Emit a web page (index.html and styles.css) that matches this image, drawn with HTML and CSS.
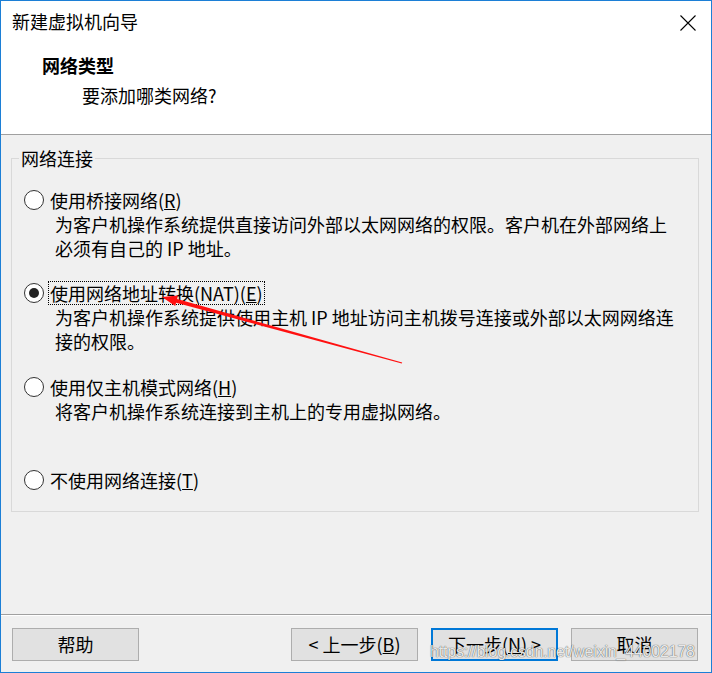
FILE: index.html
```html
<!DOCTYPE html>
<html lang="zh-CN">
<head>
<meta charset="utf-8">
<title>新建虚拟机向导</title>
<link rel="stylesheet" href="styles.css">
</head>
<body>
<div class="window">
  <div class="titlebar">
    <span class="title">新建虚拟机向导</span>
    <svg class="close" width="16" height="16" viewBox="0 0 16 16"><path d="M0.5 0.5 L15.5 15.5 M15.5 0.5 L0.5 15.5" stroke="#000" stroke-width="1.1" fill="none"/></svg>
  </div>
  <div class="header">
    <div class="h-title">网络类型</div>
    <div class="h-sub">要添加哪类网络?</div>
  </div>
  <div class="body">
    <fieldset class="group">
      <legend>网络连接</legend>
      <div class="option opt1">
        <div class="opt-row"><span class="radio"></span><span class="label">使用桥接网络(<u>R</u>)</span></div>
        <div class="desc">为客户机操作系统提供直接访问外部以太网网络的权限。客户机在外部网络上<br>必须有自己的 IP 地址。</div>
      </div>
      <div class="option opt2">
        <div class="opt-row"><span class="radio checked"></span><span class="label focus">使用网络地址转换(NAT)(<u>E</u>)</span></div>
        <div class="desc">为客户机操作系统提供使用主机 IP 地址访问主机拨号连接或外部以太网网络连<br>接的权限。</div>
      </div>
      <div class="option opt3">
        <div class="opt-row"><span class="radio"></span><span class="label">使用仅主机模式网络(<u>H</u>)</span></div>
        <div class="desc tall">将客户机操作系统连接到主机上的专用虚拟网络。</div>
      </div>
      <div class="option opt4">
        <div class="opt-row"><span class="radio"></span><span class="label">不使用网络连接(<u>T</u>)</span></div>
      </div>
    </fieldset>
  </div>
  <div class="footer">
    <button class="btn">帮助</button>
    <span class="spacer"></span>
    <button class="btn">&lt; 上一步(<u>B</u>)</button>
    <button class="btn default">下一步(<u>N</u>) &gt;</button>
    <button class="btn">取消</button>
  </div>
</div>
<svg class="arrow" width="712" height="673" viewBox="0 0 712 673">
  <polygon points="162,297 178,295.6 177.1,298.9 402.2,362.6 401.8,363.4 176.1,302.7 175.2,306" fill="#ff1010"/>
</svg>
<div class="watermark">https://blog.csdn.net/weixin_44002178</div>
</body>
</html>
```
FILE: styles.css
```css
html, body {
  margin: 0;
  padding: 0;
  background: #f0f0f0;
}
body {
  font-family: "Noto Sans CJK SC", "Noto Sans", sans-serif;
  font-size: 18px;
  color: #000;
}
.window {
  width: 712px;
  height: 673px;
  box-sizing: border-box;
  border: 1px solid #1c7fd6;
  background: #f0f0f0;
  display: flex;
  flex-direction: column;
}
.titlebar {
  height: 43px;
  box-sizing: border-box;
  background: #fff;
  display: flex;
  align-items: center;
  justify-content: space-between;
  padding: 0 15px 3px 11px;
}
.title {
  line-height: 24px;
}
.close {
  display: block;
  margin-top: 3px;
}
.header {
  height: 90px;
  background: #fff;
  border-bottom: 1px solid #a0a0a0;
  padding-left: 41px;
  box-sizing: content-box;
}
.h-title {
  font-weight: bold;
  line-height: 24px;
  padding-top: 9px;
}
.h-sub {
  line-height: 24px;
  padding-left: 40px;
  margin-top: 6px;
}
.body {
  flex: 1;
  padding: 0 12px 0 10px;
}
.group {
  margin: 11px 0 0 0;
  padding: 0 0 19px 0;
  border: 1px solid #d9d9d9;
  min-width: 0;
}
.group legend {
  margin-left: 7px;
  padding: 0 2px;
  line-height: 24px;
}
.opt-row {
  display: flex;
  align-items: center;
  height: 24px;
  padding-left: 12px;
}
.opt1 { margin-top: 18px; }
.opt2 { margin-top: 21px; }
.opt3 { margin-top: 22px; }
.opt4 { margin-top: 21px; }
.radio {
  width: 20px;
  height: 20px;
  box-sizing: border-box;
  border: 1px solid #333;
  border-radius: 50%;
  background: #fff;
  display: flex;
  align-items: center;
  justify-content: center;
  flex: none;
}
.radio.checked::after {
  content: "";
  width: 10px;
  height: 10px;
  border-radius: 50%;
  background: #222;
}
.label {
  margin-left: 4px;
  padding: 0 1px;
  border: 1px dotted transparent;
  line-height: 22px;
  white-space: nowrap;
}
.label.focus {
  border-color: #000;
}
.desc {
  padding-left: 43px;
  line-height: 24px;
  white-space: nowrap;
}
.desc.tall {
  min-height: 48px;
}
.footer {
  height: 58px;
  border-top: 1px solid #a0a0a0;
  box-shadow: inset 0 1px 0 #fff;
  display: flex;
  align-items: flex-start;
  gap: 13px;
  padding: 13px 13px 0 11px;
  box-sizing: border-box;
}
.spacer {
  flex: 1;
}
.footer .spacer + .btn {
  margin-left: -13px;
}
.btn {
  width: 127px;
  height: 33px;
  box-sizing: border-box;
  background: #e1e1e1;
  border: 1px solid #adadad;
  font-family: "Noto Sans CJK SC", "Noto Sans", sans-serif;
  font-size: 18px;
  color: #000;
  padding: 0 0 2px 0;
  line-height: 24px;
}
.btn.default {
  border: 2px solid #0078d7;
}
.arrow {
  position: absolute;
  left: 0;
  top: 0;
  pointer-events: none;
}
.watermark {
  position: absolute;
  left: 430px;
  top: 641px;
  font-family: "Liberation Sans", Arial, sans-serif;
  font-size: 16px;
  line-height: 22px;
  color: rgba(255, 255, 255, 0.9);
  text-shadow: 0 0 1px rgba(0, 0, 0, 0.6), 0 0 1px rgba(0, 0, 0, 0.4);
  letter-spacing: -0.2px;
  pointer-events: none;
}
```
